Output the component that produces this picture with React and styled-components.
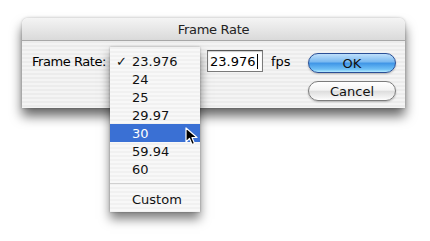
import React from 'react'
import styled, { createGlobalStyle } from 'styled-components'

const GlobalStyle = createGlobalStyle`
  html, body {
    margin: 0;
    padding: 0;
    background: #ffffff;
  }
  body {
    font-family: 'DejaVu Sans', 'Liberation Sans', sans-serif;
    font-size: 13px;
    color: #000;
  }
`;

const Page = styled.div`
  position: relative;
  width: 430px;
  height: 241px;
  overflow: hidden;
  padding: 18px 0 0 22px;
  box-sizing: border-box;
`;

const Dialog = styled.div`
  width: 383px;
  height: 90px;
  border-radius: 6px 6px 0 0;
  box-shadow: 0 8px 12px rgba(0, 0, 0, 0.6), 0 0 3px rgba(0, 0, 0, 0.25);
  display: flex;
  flex-direction: column;
`;

const TitleBar = styled.div`
  height: 22px;
  border-radius: 6px 6px 0 0;
  background: linear-gradient(#f4f4f4, #dadada);
  border-bottom: 1px solid #a8a8a8;
  display: flex;
  align-items: center;
  justify-content: center;
  letter-spacing: -0.3px;
  color: #222;
`;

const Body = styled.div`
  flex: 1;
  background: repeating-linear-gradient(#ececec 0, #ececec 2px, #f4f4f4 2px, #f4f4f4 4px);
  display: flex;
  padding: 9px 11px 0 10px;
`;

const Row = styled.div`
  display: flex;
  align-items: center;
  height: 22px;
`;

const Label = styled.span`
  width: 78px;
  letter-spacing: -0.45px;
`;

const PopupSpace = styled.div`
  width: 97px;
`;

const Field = styled.div`
  width: 52px;
  height: 20px;
  border: 1px solid #7a7a7a;
  border-top-color: #555;
  background: #fff;
  display: flex;
  align-items: center;
  padding-left: 2px;
  box-sizing: content-box;
  box-shadow: inset 0 1px 1px rgba(0,0,0,0.2);
`;

const Caret = styled.span`
  display: inline-block;
  width: 1px;
  height: 15px;
  background: #000;
  margin-left: 1px;
`;

const Unit = styled.span`
  margin-left: 8px;
  width: 37px;
`;

const Buttons = styled.div`
  display: flex;
  flex-direction: column;
  gap: 8px;
  margin-top: 3px;
`;

const Button = styled.div`
  width: 88px;
  height: 20px;
  box-sizing: border-box;
  border-radius: 10px;
  display: flex;
  align-items: center;
  justify-content: center;
  color: #111;
  border: 1px solid ${p => (p.primary ? '#2a4f96' : '#7c7c7c')};
  background: ${p =>
    p.primary
      ? 'linear-gradient(#bfe0fb 0%, #78b8f0 45%, #3e94e6 50%, #6fc0f6 85%, #b6ecff 100%)'
      : 'linear-gradient(#ffffff 0%, #f3f3f3 45%, #dedede 52%, #f2f2f2 85%, #ffffff 100%)'};
  box-shadow: 0 1px 2px rgba(0,0,0,0.25);
`;

const Menu = styled.div`
  position: absolute;
  left: 110px;
  top: 47px;
  width: 90px;
  padding: 5px 0 4px;
  background: repeating-linear-gradient(#f1f1f1 0, #f1f1f1 2px, #f8f8f8 2px, #f8f8f8 4px);
  box-shadow: 0 7px 10px rgba(0,0,0,0.5), 0 0 2px rgba(0,0,0,0.3);
`;

const Item = styled.div`
  height: 18px;
  display: flex;
  align-items: center;
  padding-left: 22px;
  position: relative;
  background: ${p => (p.active ? '#3a70d4' : 'transparent')};
  color: ${p => (p.active ? '#fff' : '#111')};
`;

const Check = styled.span`
  position: absolute;
  left: 6px;
  font-size: 13px;
`;

const Separator = styled.div`
  height: 1px;
  margin: 5px 0 6px;
  background: #d0d0d0;
`;

const Cursor = styled.svg`
  position: absolute;
  left: 185px;
  top: 127px;
`;

const rates = ['23.976', '24', '25', '29.97', '30', '59.94', '60']

export default function App() {
  return (
    <Page>
      <GlobalStyle />
      <Dialog>
        <TitleBar>Frame Rate</TitleBar>
        <Body>
          <Row>
            <Label>Frame Rate:</Label>
            <PopupSpace />
            <Field>23.976<Caret /></Field>
            <Unit>fps</Unit>
          </Row>
          <Buttons>
            <Button primary>OK</Button>
            <Button>Cancel</Button>
          </Buttons>
        </Body>
      </Dialog>
      <Menu>
        {rates.map((r, i) => (
          <Item key={r} active={r === '30'}>
            {i === 0 && <Check>✓</Check>}
            {r}
          </Item>
        ))}
        <Separator />
        <Item>Custom</Item>
      </Menu>
      <Cursor width="14" height="20" viewBox="0 0 14 20">
        <path d="M1 1 L1 15 L4.5 11.5 L7 17.5 L9.5 16.5 L7 10.5 L12 10.5 Z" fill="#000" stroke="#fff" strokeWidth="1.2" strokeLinejoin="round" />
      </Cursor>
    </Page>
  )
}
